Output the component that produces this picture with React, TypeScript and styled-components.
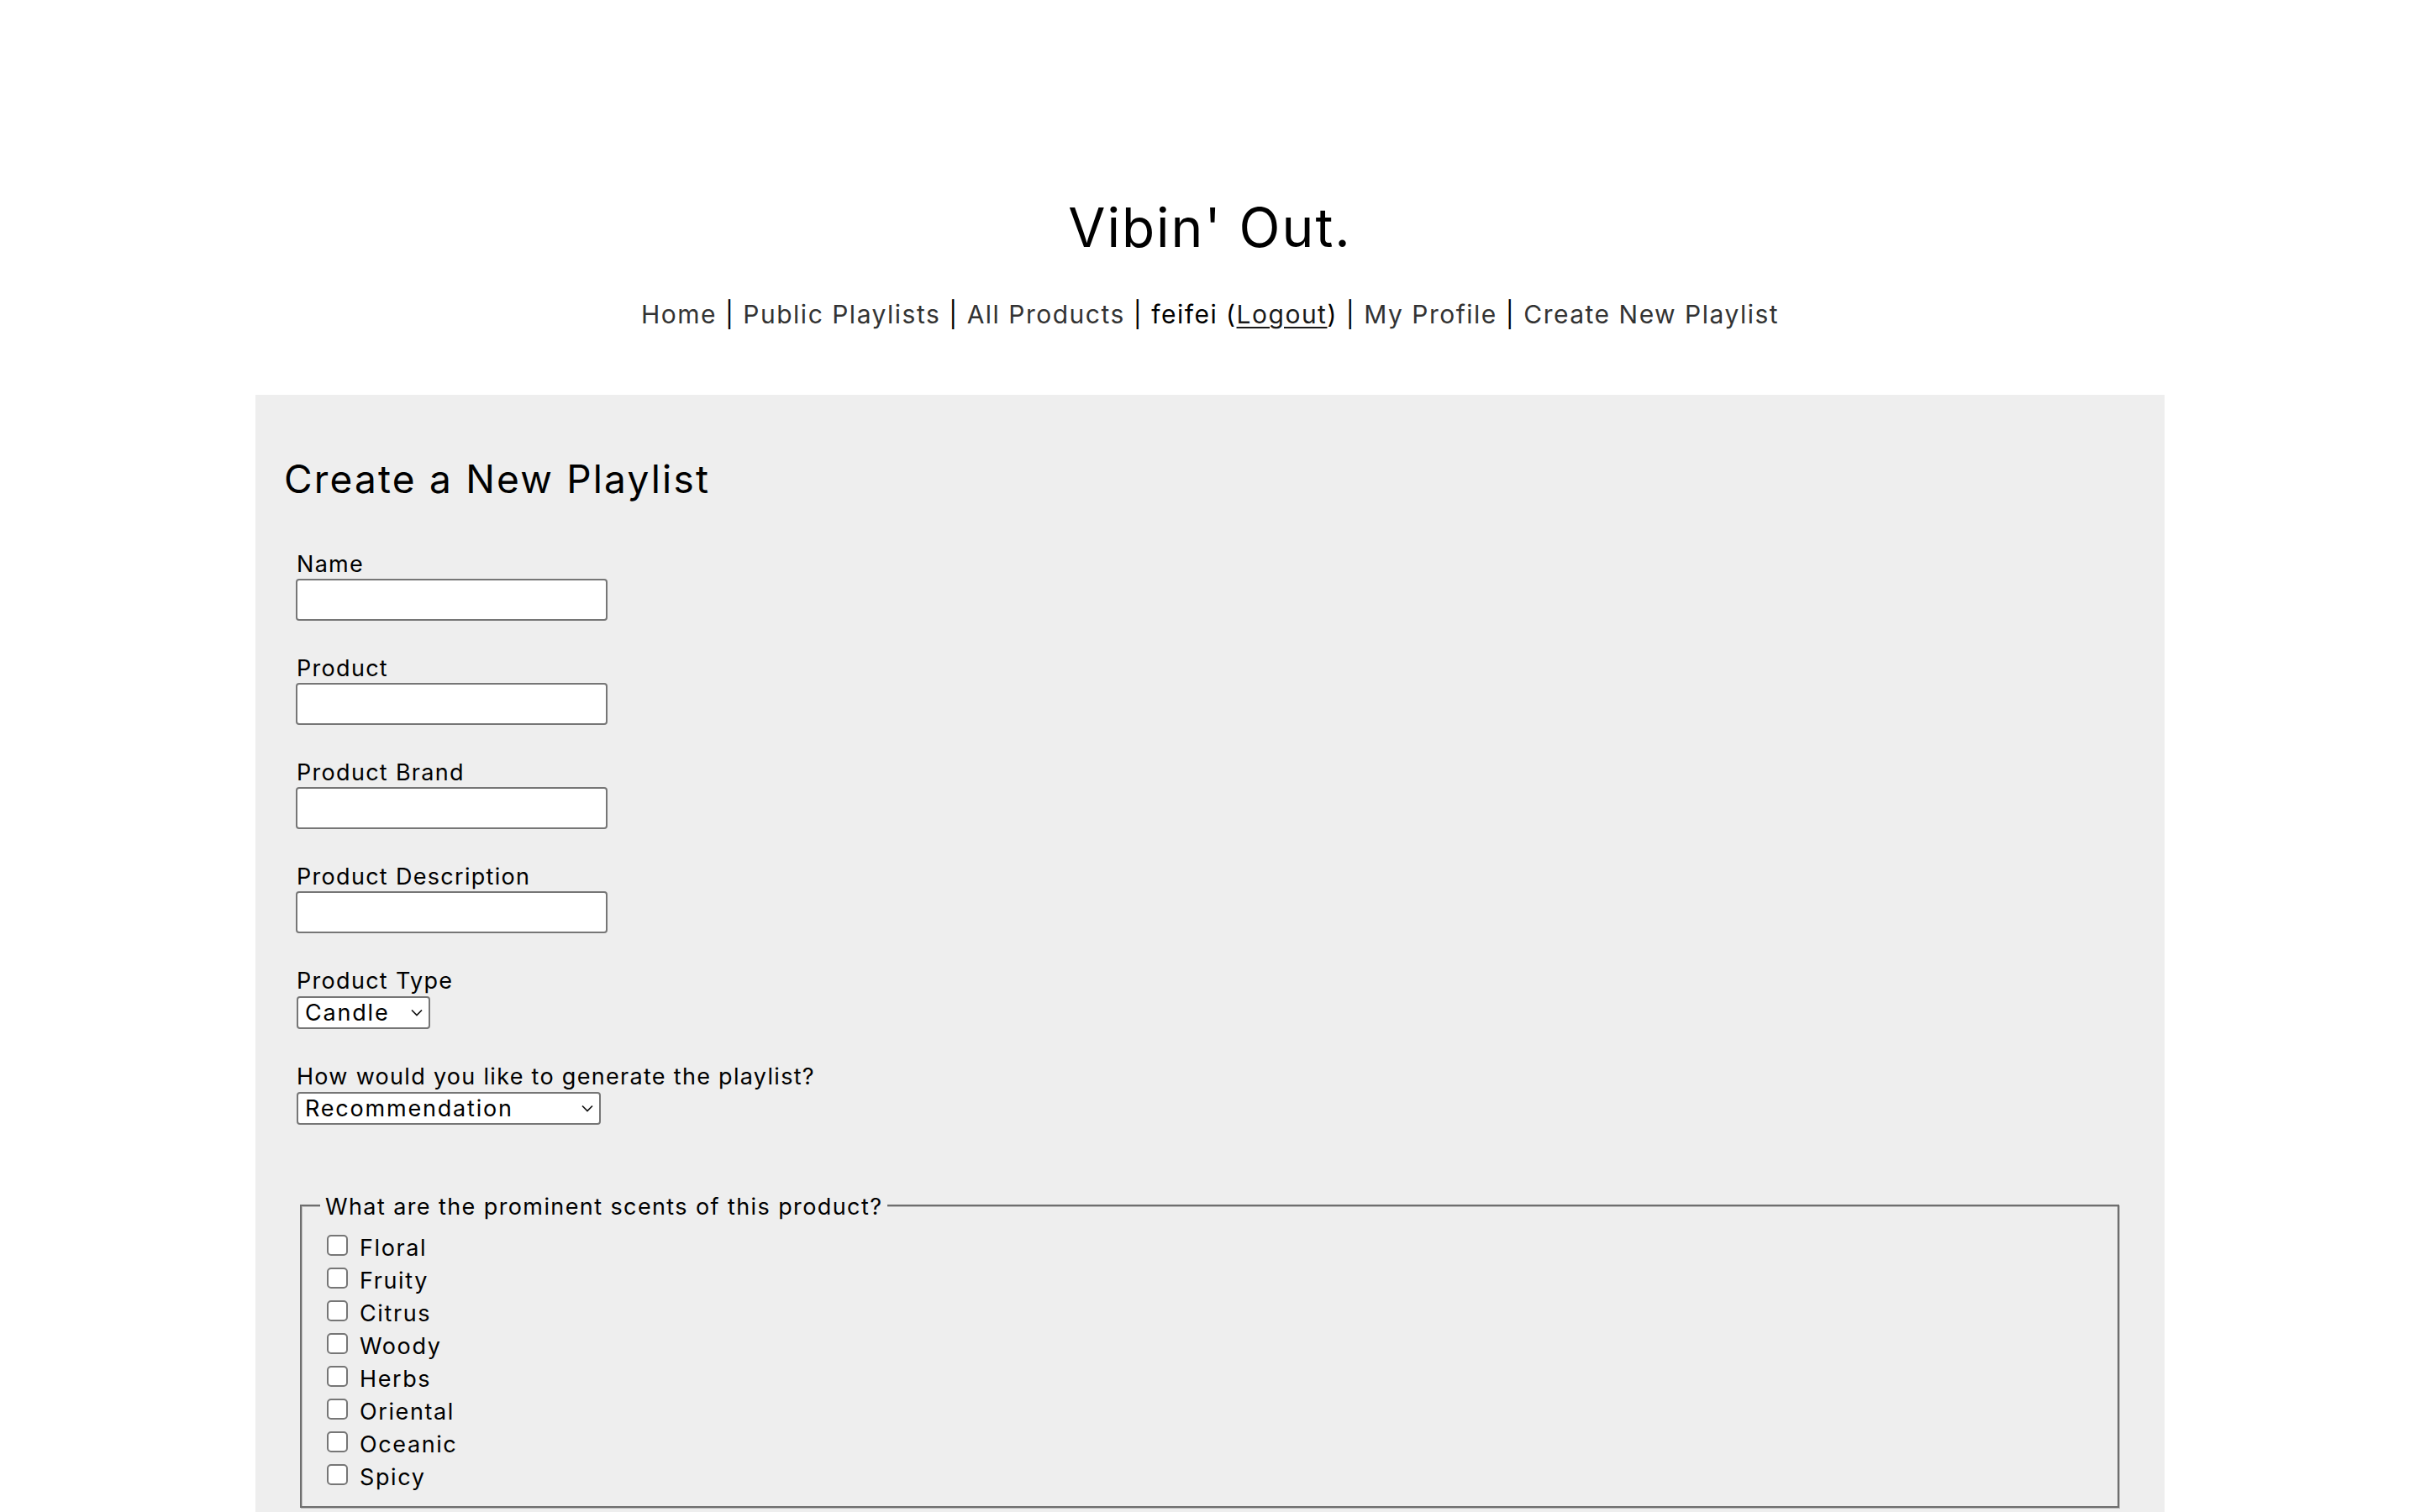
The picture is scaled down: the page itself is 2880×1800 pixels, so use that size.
import React from "react";
import styled, { createGlobalStyle } from "styled-components";

const GlobalStyle = createGlobalStyle`
    html, body {
        margin: 0;
        padding: 0;
        background: #ffffff;
    }
    body {
        font-family: Inter, "Noto Sans", "DejaVu Sans", sans-serif;
        color: #000;
    }
`;

const Header = styled.header`
    padding-top: 231px;
    text-align: center;
`;

const Title = styled.h1`
    margin: 0;
    font-size: 64px;
    line-height: 80px;
    font-weight: 400;
    letter-spacing: 2px;
`;

const Nav = styled.nav`
    margin-top: 43px;
    font-size: 30px;
    line-height: 40px;
    letter-spacing: 1.5px;
    color: #000;
    white-space: pre;

    a {
        color: #333;
        text-decoration: none;
    }
    .logout {
        color: #1a1a1a;
        text-decoration: underline;
        text-underline-offset: 4px;
        text-decoration-thickness: 2px;
    }
`;

const Panel = styled.main`
    width: 2272px;
    box-sizing: border-box;
    margin: 76px auto 0;
    padding: 0 34px 40px;
    background: #eeeeee;
`;

const Heading = styled.h2`
    margin: 0;
    padding-top: 72px;
    font-size: 46px;
    line-height: 56px;
    font-weight: 400;
    letter-spacing: 2.2px;
`;

const Form = styled.form`
    padding: 57px 15px 0;
`;

const Field = styled.div`
    display: flex;
    flex-direction: column;
    align-items: flex-start;
    margin-bottom: 40px;
`;

const Label = styled.label`
    font-size: 27px;
    line-height: 34px;
    letter-spacing: 1.3px;
`;

const TextInput = styled.input`
    box-sizing: border-box;
    width: 371px;
    height: 50px;
    margin: 0;
    margin-left: -1px;
    border: 2px solid #767676;
    border-radius: 4px;
    background: #fff;
    font: inherit;
    font-size: 26px;
    padding: 0 8px;
`;

const SelectWrap = styled.div<{ $width: number }>`
    position: relative;
    width: ${(p) => p.$width}px;
    height: 39px;
    margin-top: 1px;

    svg {
        position: absolute;
        right: 9px;
        top: 15px;
        pointer-events: none;
    }
`;

const Select = styled.select`
    appearance: none;
    box-sizing: border-box;
    width: 100%;
    height: 100%;
    margin: 0;
    padding: 0 30px 0 8px;
    border: 2px solid #767676;
    border-radius: 4px;
    background: #fff;
    color: #000;
    font-family: inherit;
    font-size: 27px;
    letter-spacing: 1.8px;
`;

const Fieldset = styled.fieldset`
    margin: 77px 5px 0 4px;
    padding: 9px 22px 18px;
    border: 2px solid #6e6e6e;
    box-shadow: 1px 1px 0 #bdbdbd, inset 1px 1px 0 #bdbdbd;
    min-width: 0;
`;

const Legend = styled.legend`
    padding: 4px 6px 0;
    font-size: 27px;
    line-height: 34px;
    letter-spacing: 1.4px;
    background: #eeeeee;
`;

const CheckRow = styled.div`
    display: flex;
    align-items: center;
    height: 39px;
`;

const Checkbox = styled.input`
    appearance: none;
    box-sizing: border-box;
    width: 25px;
    height: 25px;
    margin: 0 0 0 8px;
    border: 2px solid #767676;
    border-radius: 5px;
    background: #fff;
`;

const CheckLabel = styled.label`
    margin-left: 14px;
    padding-top: 7px;
    font-size: 27px;
    line-height: 32px;
    letter-spacing: 1.6px;
`;

const Chevron = () => (
    <svg width="14" height="9" viewBox="0 0 14 9" fill="none">
        <path d="M1 1.5l6 6 6-6" stroke="#111" strokeWidth="1.7" />
    </svg>
);

const fields = ["Name", "Product", "Product Brand", "Product Description"];
const scents = ["Floral", "Fruity", "Citrus", "Woody", "Herbs", "Oriental", "Oceanic", "Spicy"];

const App = () => {
    return (
        <>
            <GlobalStyle />
            <Header>
                <Title>Vibin' Out.</Title>
                <Nav>
                    <a href="#">Home</a> | <a href="#">Public Playlists</a> |{" "}
                    <a href="#">All Products</a> | feifei (
                    <a className="logout" href="#">
                        Logout
                    </a>
                    ) | <a href="#">My Profile</a> |{" "}
                    <a href="#">Create New Playlist</a>
                </Nav>
            </Header>
            <Panel>
                <Heading>Create a New Playlist</Heading>
                <Form>
                    {fields.map((f) => (
                        <Field key={f}>
                            <Label htmlFor={f}>{f}</Label>
                            <TextInput id={f} type="text" />
                        </Field>
                    ))}
                    <Field>
                        <Label htmlFor="type">Product Type</Label>
                        <SelectWrap $width={159}>
                            <Select id="type" defaultValue="Candle">
                                <option>Candle</option>
                                <option>Diffuser</option>
                                <option>Perfume</option>
                            </Select>
                            <Chevron />
                        </SelectWrap>
                    </Field>
                    <Field>
                        <Label htmlFor="gen">How would you like to generate the playlist?</Label>
                        <SelectWrap $width={362}>
                            <Select id="gen" defaultValue="Recommendation">
                                <option>Recommendation</option>
                                <option>Custom</option>
                            </Select>
                            <Chevron />
                        </SelectWrap>
                    </Field>
                    <Fieldset>
                        <Legend>What are the prominent scents of this product?</Legend>
                        {scents.map((s) => (
                            <CheckRow key={s}>
                                <Checkbox type="checkbox" id={s} />
                                <CheckLabel htmlFor={s}>{s}</CheckLabel>
                            </CheckRow>
                        ))}
                    </Fieldset>
                </Form>
            </Panel>
        </>
    );
};

export default App;
